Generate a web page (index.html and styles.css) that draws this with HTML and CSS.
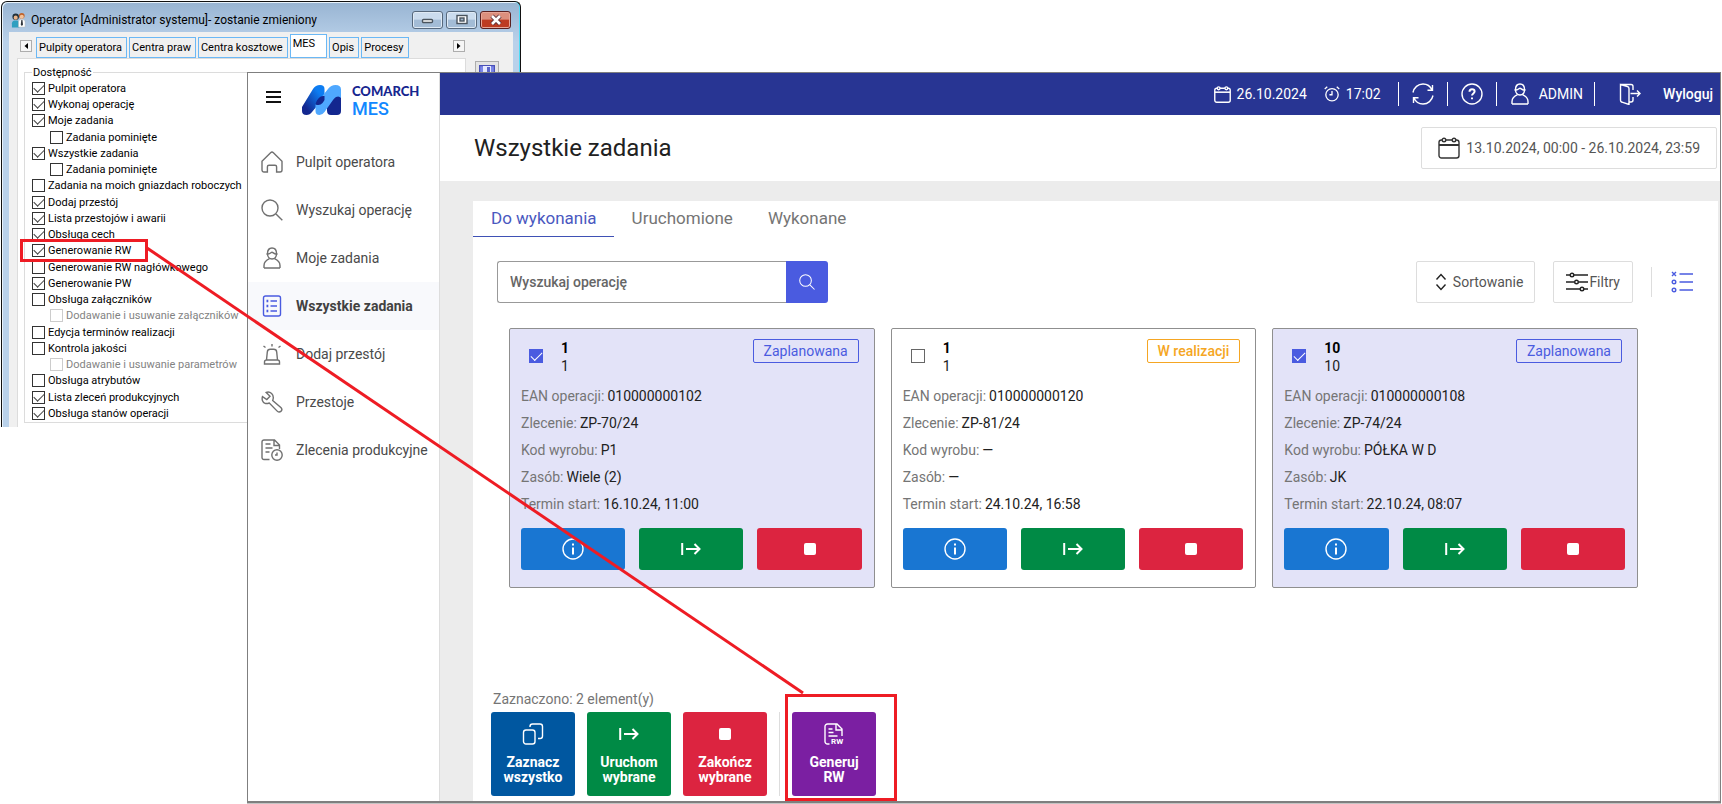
FILE: index.html
```html
<!DOCTYPE html>
<html lang="pl">
<head>
<meta charset="utf-8">
<title>Comarch MES – Wszystkie zadania</title>
<link rel="stylesheet" href="styles.css">
</head>
<body>
<svg class="sprite" aria-hidden="true">
  <symbol id="i-home" viewBox="0 0 22 22"><path d="M1 10.2 9.6 1.8a2 2 0 0 1 2.8 0L21 10.2V19a2 2 0 0 1-2 2h-3.4v-5.2a1.6 1.6 0 0 0-1.6-1.6H8a1.6 1.6 0 0 0-1.6 1.6V21H3a2 2 0 0 1-2-2z"/></symbol>
  <symbol id="i-search" viewBox="0 0 22 22"><circle cx="9" cy="9" r="8"/><path d="m15 15 6.3 6.3"/></symbol>
  <symbol id="i-user" viewBox="0 0 22 22"><path d="M6.500 6.500C6.500 3 8.500 1 11 1s4.500 2 4.500 5.500S13.500 12 11 12 6.500 10 6.500 6.500z"/><path d="M5.500 7h1.500c2.500 0 3-1.800 4-1.800S13 7 15 7h1.500M3 21v-2.500c0-3 2.500-5.500 5.500-6.800M19 21v-2.500c0-3-2.500-5.500-5.500-6.800M3 21h16"/></symbol>
  <symbol id="i-tasks" viewBox="0 0 22 22"><rect x="2.500" y="1" width="17" height="20" rx="2"/><path d="M9.500 6H16M9.500 11H16M9.500 16H16"/><path d="M5.500 6h1.800M5.500 11h1.800M5.500 16h1.800" stroke-width="2.400"/></symbol>
  <symbol id="i-alarm" viewBox="0 0 22 22"><path d="M5.500 17 6.300 9a3 3 0 0 1 3-2.700h3.400a3 3 0 0 1 3 2.700l.8 8M3.500 21v-2a2 2 0 0 1 2-2h11a2 2 0 0 1 2 2v2zM11 1v2.500M2.500 3l2 1.500M19.500 3l-2 1.500"/></symbol>
  <symbol id="i-wrench" viewBox="0 0 22 22"><path d="M5.200 1.500 9 5.300 5.800 8.500 1.500 5.600c-1 2.800.2 5.800 2.600 6.700 1.500.6 2.800.2 4.200-.3l7.900 8.100a2.500 2.500 0 0 0 3.900-3.400L11.700 9.500c1-2.600.6-5.200-1.100-6.900-1.500-1.400-3.600-1.900-5.400-1.100z"/></symbol>
  <symbol id="i-orders" viewBox="0 0 22 22"><path d="M8.500 20.500H3a2 2 0 0 1-2-2V3a2 2 0 0 1 2-2h10.500l5 5v4M13 1v5.500h5.500M4.500 5h5M4.500 9h7M4.500 13h4"/><circle cx="16" cy="16" r="5.200"/><path d="M16 13.500V16h-2"/></symbol>
  <symbol id="i-calendar" viewBox="0 0 22 22"><rect x="1" y="3" width="20" height="18" rx="2.500"/><path d="M1 8h20" stroke-width="2"/><circle cx="6" cy="3" r="1.800" fill="var(--icon-bg)"/><circle cx="16" cy="3" r="1.800" fill="var(--icon-bg)"/></symbol>
  <symbol id="i-clock" viewBox="0 0 22 22"><circle cx="11" cy="12" r="8.500"/><path d="M11 7v5H7.500M1 4l3.500-3M21 4l-3.500-3"/></symbol>
  <symbol id="i-refresh" viewBox="0 0 22 22"><path d="M1 9.500C2 4.500 6 1 11 1c4.500 0 7.500 2.500 9 6M21 12.500C20 17.500 16 21 11 21c-4.500 0-7.500-2.500-9-6M20.500 2v5.200h-5M1.500 20v-5.200h5"/></symbol>
  <symbol id="i-help" viewBox="0 0 22 22"><circle cx="11" cy="11" r="10"/><path d="M8.500 8.800c0-1.600 1-2.500 2.500-2.500s2.600.9 2.600 2.300c0 1.800-2.600 1.900-2.600 3.900M11 14.500v1.700" stroke-width="2"/></symbol>
  <symbol id="i-logout" viewBox="0 0 22 22"><path d="M1.500 1.500 8.500 3.500a2 2 0 0 1 1.500 2V21.500L3 19.200a2 2 0 0 1-1.500-2zM1.500 1.500H12a2 2 0 0 1 2 2V7M10 19h2a2 2 0 0 0 2-2v-3M11.500 10.500H21M18 7.500l3 3-3 3"/></symbol>
  <symbol id="i-sort" viewBox="0 0 12 18"><path d="m1.500 6.500 4.500-5 4.500 5M1.500 11.500l4.500 5 4.500-5"/></symbol>
  <symbol id="i-filter" viewBox="0 0 22 20"><path d="M0 3h4M8 3h14M0 10h8.500M12.500 10H22M0 17h14M18 17h4"/><circle cx="6" cy="3" r="1.800"/><circle cx="10.500" cy="10" r="1.800"/><circle cx="16" cy="17" r="1.800"/></symbol>
  <symbol id="i-list" viewBox="0 0 22 22"><path d="M8.500 3H22M8.500 11H22M8.500 19H22M1 1l4 4M5 1 1 5"/><circle cx="3" cy="11" r="1.800"/><circle cx="3" cy="19" r="1.800"/></symbol>
  <symbol id="i-info" viewBox="0 0 22 22"><circle cx="11" cy="11" r="10"/><path d="M11 5.500v2M11 9.500v7" stroke-width="2"/></symbol>
  <symbol id="i-start" viewBox="0 0 20 14"><path d="M1.200 1v12M5 7h13.500M13.500 2l5 5-5 5"/></symbol>
  <symbol id="i-stop" viewBox="0 0 12 12"><rect width="12" height="12" rx="2" fill="#fff" stroke="none"/></symbol>
  <symbol id="i-copy" viewBox="0 0 22 22"><rect x="1.500" y="7" width="11.500" height="14" rx="2.500"/><path d="M8 4V3.500A2.500 2.500 0 0 1 10.500 1H18a2.500 2.500 0 0 1 2.500 2.500V13a2.500 2.500 0 0 1-2.500 2.500h-2"/></symbol>
</svg>

<div class="desktop">
  <section class="operator" aria-label="Operator">
    <header class="op-title">
      <svg class="op-people" viewBox="0 0 16 16"><circle cx="5" cy="4.500" r="3.500" fill="#20303c"/><circle cx="5" cy="5.500" r="2.200" fill="#e9b48a"/><path d="M1 16v-4.500C1 9 3 8.500 5 8.500s4 .5 4 3V16z" fill="#2f9fc0"/><circle cx="11.500" cy="3.500" r="3" fill="#c0622a"/><circle cx="11.500" cy="4.500" r="2.200" fill="#f3c39b"/><path d="M8 15.500V10c0-2 1.500-2.500 3.500-2.500S15 8 15 10v5.500z" fill="#fff" stroke="#b9b9b9" stroke-width=".5"/><path d="M11 8h1.200l.6 5-1.200 1.500-1.200-1.500z" fill="#30353c"/></svg>
      <h2>Operator [Administrator systemu]- zostanie zmieniony</h2>
      <div class="op-controls">
        <button type="button" aria-label="Minimalizuj"><svg viewBox="0 0 14 12"><rect x="1.500" y="5.500" width="10" height="3" rx="1" fill="#fff" stroke="#4a545e"/></svg></button>
        <button type="button" aria-label="Maksymalizuj"><svg viewBox="0 0 14 12"><rect x="2" y="1.500" width="10" height="8" fill="#fff" stroke="#4a545e"/><rect x="5" y="4" width="4" height="3" fill="#9fb5cc" stroke="#4a545e"/></svg></button>
        <button type="button" class="close" aria-label="Zamknij"><svg viewBox="0 0 14 12"><path d="m3 2 8 8M11 2l-8 8" stroke="#5a3038" stroke-width="4.500"/><path d="m3 2 8 8M11 2l-8 8" stroke="#fff" stroke-width="2.600"/></svg></button>
      </div>
    </header>
    <div class="op-body">
      <div class="op-main">
        <nav class="op-tabs">
          <button type="button" class="arrow" aria-label="Poprzednie"><svg viewBox="0 0 6 6"><path d="M5 0v6L1.500 3z"/></svg></button>
          <div class="op-tablist">
            <button type="button">Pulpity operatora</button>
            <button type="button">Centra praw</button>
            <button type="button">Centra kosztowe</button>
            <button type="button" class="on">MES</button>
            <button type="button">Opis</button>
            <button type="button">Procesy</button>
          </div>
          <button type="button" class="arrow" aria-label="Następne"><svg viewBox="0 0 6 6"><path d="M1 0v6l3.500-3z"/></svg></button>
        </nav>
        <div class="op-panel">
          <fieldset>
            <legend>Dostępność</legend>
            <label><input type="checkbox" checked>Pulpit operatora</label>
            <label><input type="checkbox" checked>Wykonaj operację</label>
            <label><input type="checkbox" checked>Moje zadania</label>
            <label class="sub"><input type="checkbox">Zadania pominięte</label>
            <label><input type="checkbox" checked>Wszystkie zadania</label>
            <label class="sub"><input type="checkbox">Zadania pominięte</label>
            <label><input type="checkbox">Zadania na moich gniazdach roboczych</label>
            <label><input type="checkbox" checked>Dodaj przestój</label>
            <label><input type="checkbox" checked>Lista przestojów i awarii</label>
            <label><input type="checkbox" checked>Obsługa cech</label>
            <label><input type="checkbox" checked>Generowanie RW</label>
            <label><input type="checkbox">Generowanie RW nagłówkowego</label>
            <label><input type="checkbox" checked>Generowanie PW</label>
            <label><input type="checkbox">Obsługa załączników</label>
            <label class="sub"><input type="checkbox" disabled>Dodawanie i usuwanie załączników</label>
            <label><input type="checkbox">Edycja terminów realizacji</label>
            <label><input type="checkbox">Kontrola jakości</label>
            <label class="sub"><input type="checkbox" disabled>Dodawanie i usuwanie parametrów</label>
            <label><input type="checkbox">Obsługa atrybutów</label>
            <label><input type="checkbox" checked>Lista zleceń produkcyjnych</label>
            <label><input type="checkbox" checked>Obsługa stanów operacji</label>
          </fieldset>
        </div>
      </div>
      <button type="button" class="save" aria-label="Zapisz"><svg viewBox="0 0 16 16"><path d="M.5.500h15v15H2l-1.500-1.500z" fill="#7b86e8" stroke="#4a50b8"/><path d="M4 1h8v7H4z" fill="#e6e9ff"/><path d="M8 2h3v5H8z" fill="#5a64c8"/></svg></button>
    </div>
  </section>

  <div class="app">
    <aside class="side">
      <div class="brand">
        <button type="button" class="burger" aria-label="Menu"><svg viewBox="0 0 15 12"><path d="M0 1h15M0 6h15M0 11h15"/></svg></button>
        <svg class="logo" viewBox="0 0 39 30">
          <defs>
            <linearGradient id="lg" x1="0" y1="1" x2="1" y2="0"><stop offset=".2" stop-color="#13278f"/><stop offset=".75" stop-color="#0d7df2"/></linearGradient>
          </defs>
          <path d="M25 25.500V21L32 11q2.500-3 7-1v16q0 4-4 4h-6q-4 0-4-4.500z" fill="#13278f"/>
          <path d="M0 22 11 4q2.500-4 7-4 4.500 0 4.500 4v8L10 27q-2 3-5.500 3Q0 30 0 26z" fill="url(#lg)"/>
          <path d="M13.500 26v-6.500L26 4q3-4 7.500-4 5.500 0 5.500 4.500V13q-2-2.500-5-1-1.500.8-3 3l-8.500 12q-2 3-5 3-4 0-4-4z" fill="#4fa8ff"/>
          <path d="M13.500 19.500q1-5 4.500-7.500 2-1.500 4.500-1v4q-.5 1-2 3-2.500 3-7 1.500z" fill="#13278f"/>
        </svg>
        <div class="brand-name"><span class="b1">COMARCH</span><span class="b2">MES</span></div>
      </div>
      <nav class="menu">
        <a href="#"><svg><use href="#i-home"/></svg>Pulpit operatora</a>
        <a href="#"><svg><use href="#i-search"/></svg>Wyszukaj operację</a>
        <a href="#"><svg><use href="#i-user"/></svg>Moje zadania</a>
        <a href="#" class="on"><svg><use href="#i-tasks"/></svg>Wszystkie zadania</a>
        <a href="#"><svg><use href="#i-alarm"/></svg>Dodaj przestój</a>
        <a href="#"><svg><use href="#i-wrench"/></svg>Przestoje</a>
        <a href="#"><svg><use href="#i-orders"/></svg>Zlecenia produkcyjne</a>
      </nav>
    </aside>

    <div class="main">
      <header class="topbar">
        <span class="stamp date"><svg><use href="#i-calendar"/></svg>26.10.2024</span>
        <span class="stamp time"><svg><use href="#i-clock"/></svg>17:02</span>
        <button type="button" class="cell" aria-label="Odśwież"><svg><use href="#i-refresh"/></svg></button>
        <button type="button" class="cell" aria-label="Pomoc"><svg><use href="#i-help"/></svg></button>
        <button type="button" class="cell admin"><svg><use href="#i-user"/></svg>ADMIN</button>
        <button type="button" class="cell out"><svg><use href="#i-logout"/></svg>Wyloguj</button>
      </header>
      <div class="heading">
        <h1>Wszystkie zadania</h1>
        <button type="button" class="range"><svg><use href="#i-calendar"/></svg>13.10.2024, 00:00 - 26.10.2024, 23:59</button>
      </div>
      <div class="canvas">
        <div class="panel">
          <nav class="tabs">
            <button type="button" class="on">Do wykonania</button>
            <button type="button">Uruchomione</button>
            <button type="button">Wykonane</button>
          </nav>
          <div class="tools">
            <form class="search">
              <input type="text" placeholder="Wyszukaj operację" aria-label="Wyszukaj operację">
              <button type="button" aria-label="Szukaj"><svg><use href="#i-search"/></svg></button>
            </form>
            <div class="tool-right">
              <button type="button" class="tool sort"><svg><use href="#i-sort"/></svg>Sortowanie</button>
              <button type="button" class="tool filter"><svg><use href="#i-filter"/></svg>Filtry</button>
              <button type="button" class="view" aria-label="Widok listy"><svg><use href="#i-list"/></svg></button>
            </div>
          </div>
          <div class="cards">
            <article class="card picked">
              <div class="card-head">
                <input type="checkbox" checked aria-label="Operacja 1">
                <div class="nums"><b>1</b><span>1</span></div>
                <span class="badge">Zaplanowana</span>
              </div>
              <dl>
                <div><dt>EAN operacji:</dt><dd>010000000102</dd></div>
                <div><dt>Zlecenie:</dt><dd>ZP-70/24</dd></div>
                <div><dt>Kod wyrobu:</dt><dd>P1</dd></div>
                <div><dt>Zasób:</dt><dd>Wiele (2)</dd></div>
                <div><dt>Termin start:</dt><dd>16.10.24, 11:00</dd></div>
              </dl>
              <div class="acts">
                <button type="button" class="info" aria-label="Informacje"><svg><use href="#i-info"/></svg></button>
                <button type="button" class="start" aria-label="Uruchom"><svg><use href="#i-start"/></svg></button>
                <button type="button" class="stop" aria-label="Zakończ"><svg><use href="#i-stop"/></svg></button>
              </div>
            </article>
            <article class="card">
              <div class="card-head">
                <input type="checkbox" aria-label="Operacja 1">
                <div class="nums"><b>1</b><span>1</span></div>
                <span class="badge busy">W realizacji</span>
              </div>
              <dl>
                <div><dt>EAN operacji:</dt><dd>010000000120</dd></div>
                <div><dt>Zlecenie:</dt><dd>ZP-81/24</dd></div>
                <div><dt>Kod wyrobu:</dt><dd>—</dd></div>
                <div><dt>Zasób:</dt><dd>—</dd></div>
                <div><dt>Termin start:</dt><dd>24.10.24, 16:58</dd></div>
              </dl>
              <div class="acts">
                <button type="button" class="info" aria-label="Informacje"><svg><use href="#i-info"/></svg></button>
                <button type="button" class="start" aria-label="Uruchom"><svg><use href="#i-start"/></svg></button>
                <button type="button" class="stop" aria-label="Zakończ"><svg><use href="#i-stop"/></svg></button>
              </div>
            </article>
            <article class="card picked">
              <div class="card-head">
                <input type="checkbox" checked aria-label="Operacja 10">
                <div class="nums"><b>10</b><span>10</span></div>
                <span class="badge">Zaplanowana</span>
              </div>
              <dl>
                <div><dt>EAN operacji:</dt><dd>010000000108</dd></div>
                <div><dt>Zlecenie:</dt><dd>ZP-74/24</dd></div>
                <div><dt>Kod wyrobu:</dt><dd>PÓŁKA W D</dd></div>
                <div><dt>Zasób:</dt><dd>JK</dd></div>
                <div><dt>Termin start:</dt><dd>22.10.24, 08:07</dd></div>
              </dl>
              <div class="acts">
                <button type="button" class="info" aria-label="Informacje"><svg><use href="#i-info"/></svg></button>
                <button type="button" class="start" aria-label="Uruchom"><svg><use href="#i-start"/></svg></button>
                <button type="button" class="stop" aria-label="Zakończ"><svg><use href="#i-stop"/></svg></button>
              </div>
            </article>
          </div>
          <footer class="bulk">
            <p>Zaznaczono: 2 element(y)</p>
            <div class="bulk-row">
              <button type="button" class="all"><svg><use href="#i-copy"/></svg><span>Zaznacz wszystko</span></button>
              <button type="button" class="start"><svg><use href="#i-start"/></svg><span>Uruchom wybrane</span></button>
              <button type="button" class="stop"><svg><use href="#i-stop"/></svg><span>Zakończ wybrane</span></button>
              <div class="extra"><button type="button" class="rw"><svg viewBox="0 0 22 22"><path d="M6.500 21H4.500a2.500 2.500 0 0 1-2.500-2.500v-15A2.500 2.500 0 0 1 4.500 1h9.500l5 5v7M13 1v6h6M5.500 6h4M5.500 9.500h5M5.500 13h9"/><text x="8" y="21" class="rw-text">RW</text></svg><span>Generuj RW</span></button></div>
            </div>
          </footer>
        </div>
      </div>
    </div>
  </div>

  <svg class="marks" aria-hidden="true">
    <rect x="21.500" y="240.500" width="125" height="20"/>
    <rect x="786.500" y="695.500" width="109" height="104"/>
    <path d="M147 248 803 693"/>
  </svg>
</div>
</body>
</html>
```
FILE: styles.css
```css
* { box-sizing: border-box; }

body {
  margin: 0;
  background: #fff;
  font-family: Roboto, "Liberation Sans", sans-serif;
  font-size: 14px;
  color: #212121;
}

button, input {
  font: inherit;
  color: inherit;
  margin: 0;
}

button {
  padding: 0;
  border: 0;
  background: none;
}

h1, h2, p, dl, dd {
  margin: 0;
}

svg {
  display: block;
  flex: none;
  width: 22px;
  height: 22px;
  fill: none;
  stroke: currentColor;
  stroke-width: 1.4;
  --icon-bg: #fff;
}

.sprite { position: absolute; width: 0; height: 0; }

.desktop {
  position: relative;
  min-height: 100vh;
  overflow: hidden;
}

/* Operator window */
.operator {
  position: absolute;
  top: 1px;
  left: 1px;
  width: 520px;
  height: 426px;
  overflow: hidden;
  display: flex;
  flex-direction: column;
  padding: 0 7px;
  border: 1px solid #111;
  border-bottom: 0;
  border-radius: 6px 6px 0 0;
  background: linear-gradient(#98b4d2, #b9d1ea 40px);
  box-shadow: inset -1px 0 #4fdcf5, inset 1px 1px #e8f2fb;
  color: #000;
  font-size: 11px;
}

.operator svg { stroke: none; }

.op-title {
  display: flex;
  align-items: center;
  gap: 5px;
  height: 30px;
  padding: 6px 2px 0;
}

.op-title .op-people { width: 15px; height: 16px; }

.op-title h2 {
  flex: 1;
  font-size: 12px;
  font-weight: 400;
}

.op-controls { display: flex; gap: 3px; }

.op-controls button {
  display: grid;
  place-items: center;
  width: 31px;
  height: 18px;
  border: 1px solid #56687c;
  border-radius: 3px;
  background: linear-gradient(#cbdcee 45%, #a3bcd6 50%);
  box-shadow: inset 0 0 0 1px #dfeaf5;
}

.op-controls .close {
  border-color: #5a2020;
  background: linear-gradient(#dc8f7d 45%, #bd3b22 50%);
  box-shadow: inset 0 0 0 1px #e6a698;
}

.op-controls svg { width: 14px; height: 12px; }

.op-body {
  flex: 1;
  display: flex;
  align-items: flex-start;
  gap: 9px;
  padding-left: 8px;
  background: #f0f0f0;
}

.op-main {
  display: flex;
  flex-direction: column;
  width: 449px;
  height: 100%;
}

.op-tabs {
  display: flex;
  align-items: center;
  padding: 2px 1px 0 3px;
}

.op-tablist {
  flex: 1;
  display: flex;
  align-items: flex-end;
  gap: 2px;
  padding-left: 4px;
}

.op-tablist button {
  height: 21px;
  padding: 0 4px 0 2px;
  border: 1px solid #6bb8f5;
  background: #f0f0f0;
  white-space: nowrap;
}

.op-tablist .on {
  height: 24px;
  padding: 0 11px 6px 2px;
  background: #fff;
}

.arrow {
  display: grid;
  place-items: center;
  width: 12px;
  height: 12px;
  border: 1px solid #adadad;
  background: #f6f6f6;
}

.arrow svg { width: 6px; height: 6px; fill: #000; }

.op-panel {
  flex: 1;
  padding: 7px 6px 0;
  border: 1px solid #dcdcdc;
  border-bottom: 0;
  background: #fff;
}

.op-panel fieldset {
  display: flex;
  flex-direction: column;
  margin: 0;
  padding: 1px 7px;
  border: 1px solid #dcdcdc;
}

.op-panel legend { padding: 0 1px; line-height: 13px; }

.op-panel label {
  display: flex;
  align-items: center;
  gap: 3px;
  height: 16px;
  white-space: nowrap;
}

.op-panel label:nth-of-type(4n) { margin-top: 1px; }
.op-panel .sub { padding-left: 18px; }
.op-panel label:has(:disabled) { color: #838383; }

.op-panel input {
  appearance: none;
  display: grid;
  place-items: center;
  width: 13px;
  height: 13px;
  border: 1px solid #333;
  background: #fff;
}

.op-panel input:disabled { border-color: #ccc; }

.op-panel input:checked::before {
  content: "";
  width: 9px;
  height: 5px;
  border: solid #444;
  border-width: 0 0 1px 1px;
  transform: translateY(-1px) rotate(-45deg);
}

.save {
  display: grid;
  place-items: center;
  width: 24px;
  height: 24px;
  margin-top: 29px;
  border: 1px solid #adadad;
  background: #e4e4e4;
}

.save svg { width: 16px; height: 16px; }

/* MES window */
.app {
  position: absolute;
  top: 72px;
  right: 1px;
  bottom: 1px;
  left: 247px;
  display: flex;
  border: 1px solid #7f7f7f;
  border-bottom: 2px solid #7f7f7f;
  background: #fff;
  box-shadow: 0 1px #c4c4c4;
}

.side {
  width: 192px;
  border-right: 1px solid #ddd;
}

.brand {
  display: flex;
  align-items: flex-start;
  padding: 12px 18px 0;
  height: 65px;
}

.burger { padding-top: 6px; }
.burger svg { width: 15px; height: 12px; stroke: #111; stroke-width: 2; }
.logo { width: 39px; height: 30px; margin-left: 21px; stroke: none; }

.brand-name {
  display: flex;
  flex-direction: column;
  padding-left: 11px;
}

.b1 {
  color: #17268f;
  font-family: Lato, sans-serif;
  font-size: 13px;
  font-weight: 900;
  line-height: 12px;
}

.b2 {
  color: #1288ff;
  font-size: 18px;
  font-weight: 500;
  line-height: 23px;
}

.menu a {
  display: flex;
  align-items: center;
  gap: 13px;
  height: 48px;
  padding-left: 13px;
  color: #4a4a4a;
  text-decoration: none;
}

.menu svg { color: #707070; }
.menu .on { background: #f8f9fc; font-weight: 700; color: #424242; }
.menu .on svg { color: #4a5be0; }

.main {
  flex: 1;
  display: flex;
  flex-direction: column;
  min-width: 0;
}

.topbar {
  display: flex;
  align-items: center;
  justify-content: flex-end;
  height: 42px;
  background: #283593;
  color: #fff;
}

.topbar svg { --icon-bg: #283593; }
.stamp { display: flex; align-items: center; gap: 6px; }
.stamp svg { width: 17px; height: 17px; stroke-width: 1.8; }
.time { padding: 0 17px 0 17px; }
.time svg { width: 16px; height: 16px; }

.cell {
  display: flex;
  align-items: center;
  gap: 8px;
  height: 24px;
  padding: 0 13px;
  border-left: 1px solid #fff;
}

.admin { padding: 0 11px 0 12px; }
.out { gap: 22px; padding: 0 7px 0 24px; font-weight: 500; }

.heading {
  display: flex;
  align-items: center;
  justify-content: space-between;
  height: 66px;
  padding: 0 3px 0 34px;
}

h1 { font-size: 24px; font-weight: 400; }

.range {
  display: flex;
  align-items: center;
  gap: 6px;
  height: 42px;
  padding: 0 16px;
  border: 1px solid #ddd;
  border-radius: 2px;
  color: #555;
}

.range svg { color: #333; }

.canvas {
  flex: 1;
  display: flex;
  padding: 20px 2px 0 33px;
  background: #ececec;
}

.panel {
  flex: 1;
  display: flex;
  flex-direction: column;
  background: #fff;
}

.tabs { display: flex; }

.tabs button {
  height: 36px;
  padding: 0 17px 2px 18px;
  border-bottom: 1px solid transparent;
  color: #757575;
  font-size: 17px;
}

.tabs .on { border-color: #3f51b5; color: #4a58c0; }

.tools {
  display: flex;
  justify-content: space-between;
  padding: 24px 25px 25px 24px;
}

.search { display: flex; width: 331px; height: 42px; }

.search input {
  flex: 1;
  min-width: 0;
  padding: 0 12px;
  border: 1px solid #999;
  border-right: 0;
  border-radius: 3px 0 0 3px;
}

.search input::placeholder { color: #666; font-weight: 500; opacity: 1; }

.search button {
  display: grid;
  place-items: center;
  width: 42px;
  border-radius: 0 3px 3px 0;
  background: #4a5be0;
  color: #fff;
}

.search svg { width: 16px; height: 16px; }
.tool-right { display: flex; align-items: center; }

.tool {
  display: flex;
  align-items: center;
  height: 42px;
  border: 1px solid #ddd;
  border-radius: 2px;
  color: #555;
}

.tool svg { color: #222; }
.sort { gap: 6px; padding: 0 11px 0 18px; }
.sort svg { width: 12px; height: 18px; }
.filter { gap: 1px; margin: 0 18px; padding: 0 12px; }
.filter svg { height: 20px; }
.view { height: 30px; padding-left: 19px; border-left: 1px solid #ddd; color: #4a5be0; }

.cards {
  display: grid;
  grid-template-columns: repeat(3, 1fr);
  gap: 16px;
  padding: 0 80px 0 36px;
}

.card {
  padding: 10px 12px 17px 11px;
  border: 1px solid #8f8f8f;
  border-radius: 2px;
}

.picked { background: #e3e3f8; }

.card-head {
  display: flex;
  align-items: flex-start;
  height: 44px;
  padding: 0 3px 0 8px;
}

.card-head input {
  appearance: none;
  display: grid;
  place-items: center;
  width: 14px;
  height: 14px;
  margin-top: 10px;
  border: 1px solid #666;
  background: #fff;
}

.card-head input:checked { border-color: #4a5be0; background: #4a5be0; }

.card-head input:checked::before {
  content: "";
  width: 10px;
  height: 5px;
  border: solid #fff;
  border-width: 0 0 1px 1px;
  transform: translateY(-1px) rotate(-45deg);
}

.nums {
  flex: 1;
  display: flex;
  flex-direction: column;
  padding-left: 18px;
  line-height: 18px;
}

.nums b { color: #000; }

.badge {
  padding: 0 10px;
  border: 1px solid #4a5be0;
  border-radius: 2px;
  color: #4a5be0;
  line-height: 22px;
}

.busy { border-color: #f5a623; color: #f5a623; font-weight: 500; }

dl div { display: flex; gap: 3px; line-height: 27px; }
dt { color: #757575; }

.acts {
  display: grid;
  grid-template-columns: repeat(3, 1fr);
  gap: 14px;
  padding-top: 10px;
}

.acts button {
  display: grid;
  place-items: center;
  height: 42px;
  border-radius: 3px;
  color: #fff;
}

.acts .info { background: #1976d2; }
.acts .start, .bulk .start { background: #008a45; }
.acts .stop, .bulk .stop { background: #dc2440; }
.start svg { width: 20px; height: 14px; stroke-width: 2; }
.stop svg { width: 12px; height: 12px; }

.bulk { margin-top: auto; padding: 0 18px 5px; }
.bulk p { padding-left: 2px; color: #757575; line-height: 25px; }
.bulk-row { display: flex; gap: 12px; }

.bulk button {
  display: grid;
  grid-template-rows: 22px 32px;
  justify-items: center;
  align-items: center;
  gap: 9px;
  width: 84px;
  height: 84px;
  padding: 11px 10px 10px;
  border-radius: 3px;
  color: #fff;
  font-weight: 700;
  line-height: 15px;
}

.bulk .all { background: #0057a0; }
.bulk .rw { background: #7b1fa2; }
.bulk .rw span { width: 52px; }
.extra { padding-left: 12px; border-left: 1px solid #ddd; }
.rw-text { fill: #fff; stroke: none; font-size: 8px; font-weight: 700; }

/* Red annotation layer */
.marks {
  position: absolute;
  inset: 0;
  width: 100%;
  height: 100%;
  stroke: #ee1c24;
  stroke-width: 3;
  pointer-events: none;
}
```
